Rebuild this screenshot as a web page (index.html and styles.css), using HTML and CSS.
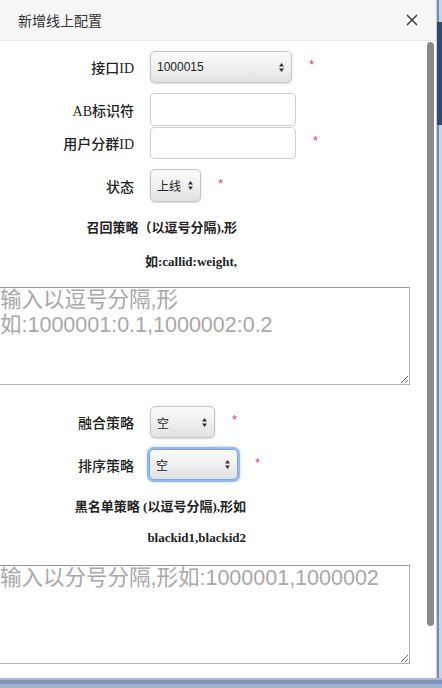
FILE: index.html
```html
<!DOCTYPE html>
<html lang="zh-CN">
<head>
<meta charset="utf-8">
<title>新增线上配置</title>
<link rel="stylesheet" href="styles.css">
</head>
<body>
<div class="screen">
  <div class="modal">
    <header class="modal-header">
      <h4 class="modal-title">新增线上配置</h4>
      <svg class="close" width="12" height="12" viewBox="0 0 12 12"><path d="M1 1L11 11M11 1L1 11" stroke="#444" stroke-width="1.6" fill="none"/></svg>
    </header>
    <div class="modal-body">
      <form class="form">
        <div class="row r1">
          <label class="lbl">接口ID</label>
          <div class="sel w-api"><span>1000015</span><svg width="5" height="9" viewBox="0 0 5 9"><path d="M0 3.6L2.5 0L5 3.6Z M0 5.4L2.5 9L5 5.4Z" fill="#333"/></svg></div>
          <span class="req">*</span>
        </div>
        <div class="row r2">
          <label class="lbl">AB标识符</label>
          <div class="inp h33"></div>
        </div>
        <div class="row r3">
          <label class="lbl">用户分群ID</label>
          <div class="inp h32"></div>
          <span class="req">*</span>
        </div>
        <div class="row r4">
          <label class="lbl">状态</label>
          <div class="sel w-state h33"><span>上线</span><svg width="5" height="9" viewBox="0 0 5 9"><path d="M0 3.6L2.5 0L5 3.6Z M0 5.4L2.5 9L5 5.4Z" fill="#333"/></svg></div>
          <span class="req">*</span>
        </div>
        <p class="hint hint1">召回策略（以逗号分隔),形<br>如:callid:weight,</p>
        <textarea class="ta ta1" placeholder="输入以逗号分隔,形如:1000001:0.1,1000002:0.2"></textarea>
        <div class="row r5">
          <label class="lbl">融合策略</label>
          <div class="sel w-merge"><span>空</span><svg width="5" height="9" viewBox="0 0 5 9"><path d="M0 3.6L2.5 0L5 3.6Z M0 5.4L2.5 9L5 5.4Z" fill="#333"/></svg></div>
          <span class="req">*</span>
        </div>
        <div class="row r6">
          <label class="lbl">排序策略</label>
          <div class="sel w-sort focus"><span>空</span><svg width="5" height="9" viewBox="0 0 5 9"><path d="M0 3.6L2.5 0L5 3.6Z M0 5.4L2.5 9L5 5.4Z" fill="#333"/></svg></div>
          <span class="req">*</span>
        </div>
        <p class="hint hint2">黑名单策略 (以逗号分隔),形如<br>blackid1,blackid2</p>
        <textarea class="ta ta2" placeholder="输入以分号分隔,形如:1000001,1000002"></textarea>
      </form>
      <div class="thumb"></div>
    </div>
  </div>
  <div class="side"></div>
</div>
<div class="band"></div>
</body>
</html>
```
FILE: styles.css
```css
* { box-sizing: border-box; }
html, body { margin: 0; padding: 0; }
body {
  width: 442px;
  height: 688px;
  overflow: hidden;
  background: #8aa2c3;
  font-family: "Liberation Serif", "Noto Sans CJK SC", serif;
  color: #333;
}
.screen { display: flex; height: 678px; }
.modal {
  width: 437px;
  height: 678px;
  flex: none;
  background: #fff;
  border-right: 1px solid #c9ced6;
  display: flex;
  flex-direction: column;
  overflow: hidden;
}
.side {
  flex: 1;
  background:
    linear-gradient(to bottom, transparent 0 22px, #2e4b78 22px 125px, transparent 125px),
    linear-gradient(to right, #6f8fc2 0 2px, #c9d4e2 2px);
}
.band {
  height: 10px;
  background: linear-gradient(to bottom, #a9bbd3 0 2px, #7e97ba 2px 6px, #9fb2cb 6px);
}
.modal-header {
  height: 41px;
  flex: none;
  background: #f6f6f6;
  border-bottom: 1px solid #e7e7e7;
  display: flex;
  align-items: center;
  justify-content: space-between;
  padding: 0 18px 0 18px;
}
.modal-title {
  margin: 0;
  font-size: 14px;
  font-weight: 400;
  color: #333;
  font-family: "Liberation Serif", "Noto Sans CJK SC", serif;
}
.close { display: block; }
.modal-body { position: relative; flex: 1; overflow: hidden; }
.form { display: flex; flex-direction: column; margin: 0; }
.row { display: flex; align-items: center; }
.lbl {
  width: 134px;
  flex: none;
  text-align: right;
  font-size: 14px;
  font-weight: 500;
  color: #222;
}
.sel, .inp { margin-left: 16px; flex: none; }
.sel {
  height: 32px;
  display: flex;
  align-items: center;
  justify-content: space-between;
  padding: 0 7px 0 6px;
  border: 1px solid #c4c4c4;
  border-radius: 5px;
  background: linear-gradient(#fbfbfb, #f1f1f1 45%, #e1e1e1);
  box-shadow: 0 1px 2px rgba(0,0,0,0.15);
  font-family: "Liberation Sans", "Noto Sans CJK SC", sans-serif;
  font-size: 12px;
  color: #222;
}
.sel svg { display: block; }
.h33 { height: 33px; }
.h32 { height: 32px; }
.w-api { width: 142px; }
.w-state { width: 51px; }
.w-merge { width: 65px; }
.w-sort { width: 89px; height: 31px; margin-left: 15px; }
.focus {
  border-color: #79a3e2;
  box-shadow: 0 0 0 2px #93b9ee, 0 0 3px 2px rgba(110,155,225,0.5);
}
.inp {
  width: 146px;
  border: 1px solid #cfcfcf;
  border-radius: 4px;
  background: #fff;
}
.req {
  margin-left: 17px;
  color: #e2435f;
  font-family: "Liberation Sans", sans-serif;
  font-size: 13px;
  line-height: 12px;
  margin-bottom: 4px;
}
.r1 { margin-top: 10px; }
.r2 { margin-top: 10px; }
.r3 { margin-top: 1px; }
.r4 { margin-top: 10px; }
.r5 { margin-top: 21px; }
.r6 { margin-top: 11px; }
.hint {
  margin: 0;
  font-size: 13px;
  font-weight: 600;
  text-align: right;
  color: #222;
}
.hint1 { width: 237px; margin-top: 9px; line-height: 34px; }
.hint2 { width: 246px; margin-top: 11px; line-height: 31px; }
.ta {
  display: block;
  margin: 0 0 0 -3px;
  width: 413px;
  padding: 0 2px;
  border: 1px solid;
  border-color: #9a9a9a #b0b0b0 #b0b0b0 #9a9a9a;
  font-family: "Liberation Sans", "Noto Sans CJK SC", sans-serif;
  font-size: 21.5px;
  line-height: 25px;
  color: #333;
  background: #fff;
  outline: none;
}
.ta::placeholder { color: #a8a8a8; }
.ta1 { margin-top: 8px; height: 98px; }
.ta2 { margin-top: 12px; height: 99px; }
.thumb {
  position: absolute;
  top: 1px;
  right: 2px;
  width: 7px;
  height: 584px;
  border-radius: 4px;
  background: #8a8a8a;
}
```
